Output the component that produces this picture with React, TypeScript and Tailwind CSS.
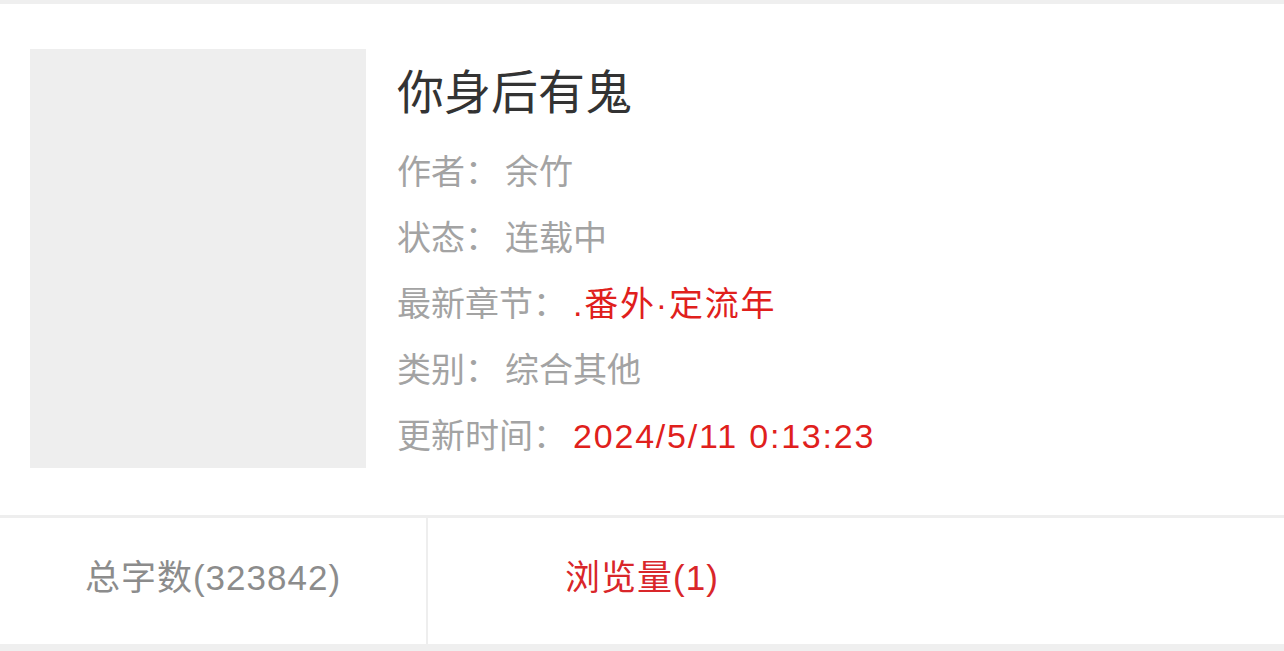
import React from 'react'

const font = { fontFamily: '"Liberation Sans", "Noto Sans CJK SC", sans-serif' }

const rows = [
  { label: '作者：', value: '余竹', red: false },
  { label: '状态：', value: '连载中', red: false },
  { label: '最新章节：', value: '.番外·定流年', red: true },
  { label: '类别：', value: '综合其他', red: false },
  { label: '更新时间：', value: '2024/5/11 0:13:23', red: true },
]

export default function App() {
  return (
    <div className="min-h-screen bg-[#efefef] pt-[4px]" style={font}>
      <div className="bg-white">
        <div className="flex pl-[30px] pt-[45px] pb-[46px]">
          <div className="w-[336px] h-[419px] bg-[#eeeeee] shrink-0" />
          <div className="ml-[31px] pt-[11px]">
            <h1 className="text-[47px] leading-[66px] text-[#333333] font-normal">你身后有鬼</h1>
            <div className="mt-[13px]">
              {rows.map(r => (
                <div key={r.label} className="flex text-[34px] leading-[66px] text-[#a3a3a3]">
                  <span>{r.label}</span>
                  <span className={`ml-[6px] ${r.red ? 'text-[#e0201c] tracking-[1.8px]' : ''}`}>{r.value}</span>
                </div>
              ))}
            </div>
          </div>
        </div>
        <div className="grid grid-cols-3 border-t-[3px] border-[#eeeeee] h-[129px]">
          <div className="flex items-center justify-center border-r-2 border-[#eeeeee] pb-[6px] text-[35px] tracking-[1px] text-[#8c8c8c]">总字数(323842)</div>
          <div className="flex items-center justify-center pb-[6px] text-[35px] tracking-[1px] text-[#d9262a]">浏览量(1)</div>
          <div />
        </div>
      </div>
    </div>
  )
}
